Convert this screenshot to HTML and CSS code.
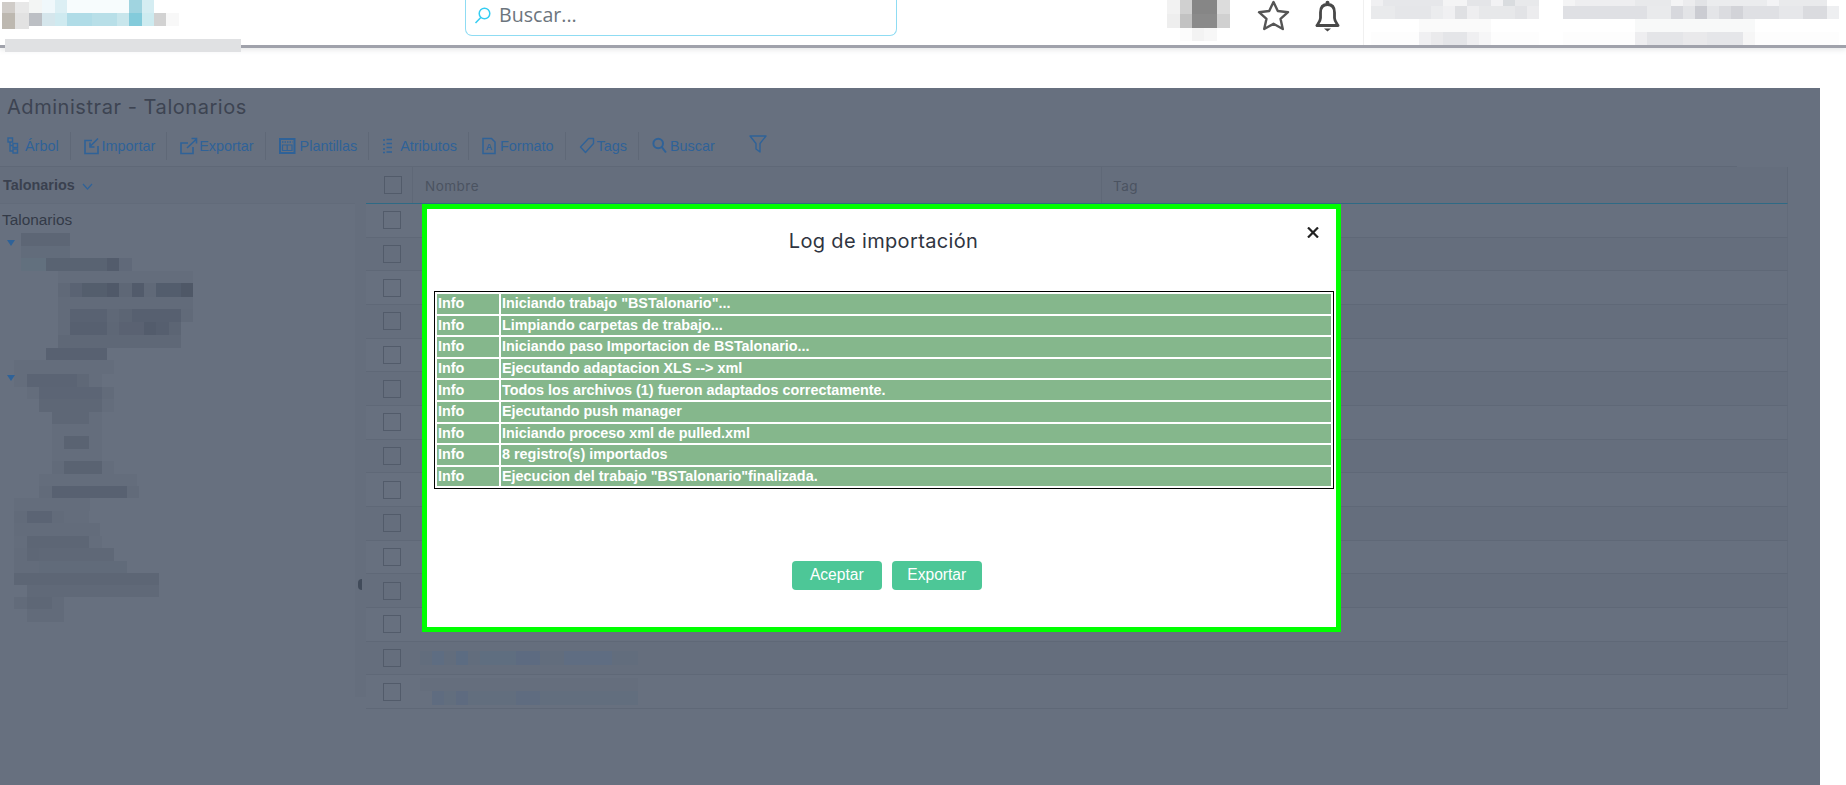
FILE: index.html
```html
<!DOCTYPE html>
<html lang="es">
<head>
<meta charset="utf-8">
<title>Administrar - Talonarios</title>
<link rel="stylesheet" href="styles.css">
</head>
<body>
<header class="topbar">
  <div class="brand">
    <svg class="mosaic" width="180" height="29" viewBox="0 0 180 29" shape-rendering="crispEdges">
      <rect x="2" y="2" width="13" height="11" fill="#d0ccc8"/><rect x="15" y="2" width="14" height="11" fill="#e8e8e8"/>
      <rect x="29" y="0" width="13" height="13" fill="#f3f5f4"/><rect x="42" y="0" width="13" height="13" fill="#f0f8fb"/>
      <rect x="55" y="0" width="12" height="13" fill="#dceff4"/><rect x="67" y="0" width="62" height="13" fill="#f7fcfd"/>
      <rect x="129" y="0" width="13" height="13" fill="#a0d4e0"/><rect x="142" y="0" width="12" height="13" fill="#d5edf2"/>
      <rect x="2" y="13" width="13" height="16" fill="#bdb8b0"/><rect x="15" y="13" width="14" height="16" fill="#e2e2e2"/>
      <rect x="29" y="13" width="13" height="13" fill="#bcbfc4"/><rect x="42" y="13" width="13" height="13" fill="#d5e6ec"/>
      <rect x="55" y="13" width="12" height="13" fill="#cfeaf0"/><rect x="67" y="13" width="25" height="13" fill="#b0dce7"/>
      <rect x="92" y="13" width="25" height="13" fill="#b8dfe8"/><rect x="117" y="13" width="12" height="13" fill="#c8e6ec"/>
      <rect x="129" y="13" width="13" height="13" fill="#83cbdb"/><rect x="142" y="13" width="12" height="13" fill="#cdebf0"/>
      <rect x="154" y="13" width="12" height="13" fill="#d2d2d2"/><rect x="166" y="13" width="13" height="13" fill="#f8f8f8"/>
    </svg>
    <div class="brand-label"></div>
  </div>
  <div class="search">
    <svg width="18" height="17" viewBox="0 0 18 17" fill="none" stroke="#35cdf2" stroke-width="1.5"><circle cx="10.5" cy="6.5" r="5.3"/><path d="M6.8 10.4 1.5 16"/></svg>
    <span class="search-text">Buscar...</span>
  </div>
  <svg class="mosaic avatar" width="63" height="41" viewBox="0 0 63 41" shape-rendering="crispEdges">
    <rect x="0" y="0" width="13" height="14" fill="#f2f2f2"/><rect x="13" y="0" width="12" height="14" fill="#d0d0d0"/>
    <rect x="25" y="0" width="25" height="14" fill="#868686"/><rect x="50" y="0" width="13" height="14" fill="#dcdcdc"/>
    <rect x="0" y="14" width="13" height="14" fill="#eeeeee"/><rect x="13" y="14" width="12" height="14" fill="#c2c2c2"/>
    <rect x="25" y="14" width="25" height="14" fill="#8a8a8a"/><rect x="50" y="14" width="13" height="14" fill="#d0d0d0"/>
    <rect x="13" y="28" width="12" height="13" fill="#fcfcfc"/><rect x="25" y="28" width="12" height="13" fill="#f3f3f3"/><rect x="37" y="28" width="13" height="13" fill="#f7f7f7"/>
  </svg>
  <svg class="star" width="33" height="31" viewBox="0 0 33 31" fill="none" stroke="#555" stroke-width="2.4" stroke-linejoin="round"><path d="M16.5 2 20.8 11 31 12.2 23.5 18.8 25.8 29 16.5 23.8 7.2 29 9.5 18.8 2 12.2 12.2 11Z"/></svg>
  <svg class="bell" width="25" height="32" viewBox="0 0 25 32" fill="none" stroke="#484848" stroke-width="2.800"><path d="M12.5 4.500C7.500 4.500 5.500 8 5.500 12.500V18C5.500 21 3.600 23 1.900 25.500H23.100C21.400 23 19.500 21 19.500 18V12.500C19.500 8 17.500 4.500 12.500 4.500Z" stroke-linejoin="round"/><circle cx="12.5" cy="2.8" r="2" fill="#484848" stroke="none"/><path d="M9 28.500H16L12.500 31.500Z" fill="#484848" stroke="none"/></svg>
  <div class="divider"></div>
  <svg class="mosaic user-a" width="168" height="45" viewBox="0 0 168 45" shape-rendering="crispEdges">
    <rect x="0" y="0" width="12" height="6" fill="#f0f0f2"/><rect x="12" y="0" width="60" height="6" fill="#e6e7ea"/><rect x="72" y="0" width="24" height="6" fill="#f4f4f5"/><rect x="96" y="0" width="24" height="6" fill="#e4e5e8"/><rect x="120" y="0" width="12" height="6" fill="#f2f2f4"/><rect x="132" y="0" width="12" height="6" fill="#d9dcdf"/><rect x="144" y="0" width="24" height="6" fill="#e8e9eb"/>
    <rect x="0" y="6" width="24" height="13" fill="#e9eaec"/><rect x="24" y="6" width="36" height="13" fill="#e5e6e9"/><rect x="60" y="6" width="12" height="13" fill="#ebecee"/><rect x="72" y="6" width="12" height="13" fill="#f0f0f2"/><rect x="84" y="6" width="12" height="13" fill="#dfe0e3"/><rect x="96" y="6" width="12" height="13" fill="#eeeef0"/><rect x="108" y="6" width="36" height="13" fill="#e7e8ea"/><rect x="144" y="6" width="12" height="13" fill="#e2e3e6"/><rect x="156" y="6" width="12" height="13" fill="#ececee"/>
    <rect x="48" y="19" width="72" height="13" fill="#fafafa"/>
    <rect x="0" y="32" width="168" height="13" fill="#fdfdfd"/><rect x="48" y="32" width="12" height="13" fill="#f0f0f2"/><rect x="60" y="32" width="12" height="13" fill="#eaeaec"/><rect x="72" y="32" width="24" height="13" fill="#e4e5e8"/><rect x="96" y="32" width="12" height="13" fill="#efeff1"/><rect x="108" y="32" width="12" height="13" fill="#f6f6f7"/>
  </svg>
  <svg class="mosaic user-b" width="276" height="45" viewBox="0 0 276 45" shape-rendering="crispEdges">
    <rect x="0" y="0" width="12" height="6" fill="#f4f4f5"/><rect x="12" y="0" width="60" height="6" fill="#eeeef0"/><rect x="72" y="0" width="36" height="6" fill="#e8e9eb"/><rect x="108" y="0" width="12" height="6" fill="#f4f4f5"/><rect x="120" y="0" width="12" height="6" fill="#ececee"/><rect x="132" y="0" width="12" height="6" fill="#e2e3e6"/><rect x="144" y="0" width="60" height="6" fill="#ebecee"/><rect x="204" y="0" width="12" height="6" fill="#f3f3f5"/><rect x="216" y="0" width="48" height="6" fill="#e9eaec"/>
    <rect x="0" y="6" width="84" height="13" fill="#dfe0e4"/><rect x="84" y="6" width="24" height="13" fill="#e9eaec"/><rect x="108" y="6" width="12" height="13" fill="#d7d8dd"/><rect x="120" y="6" width="12" height="13" fill="#e3e4e7"/><rect x="132" y="6" width="12" height="13" fill="#cbccd2"/><rect x="144" y="6" width="12" height="13" fill="#e4e5e8"/><rect x="156" y="6" width="12" height="13" fill="#dbdce0"/><rect x="168" y="6" width="12" height="13" fill="#d2d3d8"/><rect x="180" y="6" width="36" height="13" fill="#dfe0e4"/><rect x="216" y="6" width="24" height="13" fill="#e6e7ea"/><rect x="240" y="6" width="24" height="13" fill="#dadbdf"/><rect x="264" y="6" width="12" height="13" fill="#eeeff1"/>
    <rect x="72" y="19" width="120" height="13" fill="#f8f9f9"/>
    <rect x="0" y="32" width="276" height="13" fill="#fdfdfd"/><rect x="72" y="32" width="12" height="13" fill="#eeeef0"/><rect x="84" y="32" width="36" height="13" fill="#e4e5e8"/><rect x="120" y="32" width="24" height="13" fill="#e9e9eb"/><rect x="144" y="32" width="36" height="13" fill="#e5e6e9"/><rect x="180" y="32" width="12" height="13" fill="#f6f6f6"/>
  </svg>
</header>

<main class="app">
  <h1 class="page-title">Administrar - Talonarios</h1>
  <nav class="toolbar">
    <a class="tool first"><svg width="18" height="18" viewBox="0 0 18 18" fill="none" stroke="#2f6298" stroke-width="1.4"><rect x="1" y="1" width="4.5" height="4"/><rect x="6" y="6.5" width="4.5" height="4"/><rect x="6" y="12" width="4.5" height="4"/><path d="M3 5v9h3M3 8.500h3"/></svg>Árbol</a>
    <a class="tool"><svg width="18" height="18" viewBox="0 0 18 18" fill="none" stroke="#2f6298" stroke-width="1.6"><path d="M8 3.500H1V16.500H14V9"/><path d="M14 1.500 6.500 9M6 5.500V10H10.500"/></svg>Importar</a>
    <a class="tool"><svg width="19" height="18" viewBox="0 0 19 18" fill="none" stroke="#2f6298" stroke-width="1.6"><path d="M8 6H1V16.500H13V10"/><path d="M7 11 16 2.500M11.500 1.500H16.500V6.500"/></svg>Exportar</a>
    <a class="tool"><svg width="21" height="18" viewBox="0 0 21 18" fill="none" stroke="#2f6298"><rect x="1" y="2" width="14.500" height="14" stroke-width="2"/><path d="M3 5H13.500" stroke-width="1.500" stroke-dasharray="1.500 1"/><path d="M3.500 8H13V13.500H3.500ZM8.200 8V13.500" stroke-width="1.200"/></svg>Plantillas</a>
    <a class="tool"><svg width="18" height="18" viewBox="0 0 18 18" fill="none" stroke="#2f6298" stroke-width="1.300"><path d="M1 3h2M1 7.500h2M1 12h2M1 15.500h2"/><path d="M4.500 2.500h5.500M4.500 6.500h5.500M4.500 10.500h5.500M4.500 15h5.500" stroke-width="1.500"/></svg>Atributos</a>
    <a class="tool"><svg width="18" height="18" viewBox="0 0 18 18" fill="none" stroke="#2f6298" stroke-width="1.500"><path d="M1 1.500H9.500L13 5V16.500H1Z"/><text x="3.800" y="13" class="icon-letter">A</text></svg>Formato</a>
    <a class="tool"><svg width="18" height="18" viewBox="0 0 18 18" fill="none" stroke="#2f6298" stroke-width="1.400"><path d="M1.500 10 9.500 1.500H14.500V6.500L6.500 15.500Z" stroke-linejoin="round"/></svg>Tags</a>
    <a class="tool last"><svg width="18" height="18" viewBox="0 0 18 18" fill="none" stroke="#2f6298" stroke-width="2"><circle cx="6.200" cy="6.500" r="4.800"/><path d="M9.800 10.200 14 15.500"/></svg>Buscar</a>
    <svg class="filter" width="18" height="18" viewBox="0 0 18 18" fill="none" stroke="#2f6298" stroke-width="1.400"><path d="M1 1H17L11 8.500V17L7 14V8.500Z" stroke-linejoin="round"/></svg>
  </nav>
  <div class="workspace">
    <aside class="tree">
      <div class="tree-head">Talonarios <svg width="11" height="7" viewBox="0 0 11 7" fill="none" stroke="#2f6298" stroke-width="1.200"><path d="M1 1 5.500 6 10 1"/></svg></div>
      <div class="tree-root">Talonarios</div>
      <svg class="mosaic tree-blur" width="200" height="400" viewBox="0 232 200 400" shape-rendering="crispEdges">
        <rect x="21" y="233" width="49" height="13" fill="#5b6473"/><rect x="21" y="246" width="49" height="12" fill="#626c7b"/>
        <rect x="21" y="258" width="25" height="13" fill="#62707e"/><rect x="46" y="258" width="61" height="13" fill="#566070"/><rect x="107" y="258" width="12" height="13" fill="#4f5868"/><rect x="119" y="258" width="13" height="13" fill="#5f6878"/>
        <rect x="58" y="271" width="135" height="12" fill="#646d7c"/>
        <rect x="58" y="283" width="12" height="14" fill="#5f6877"/><rect x="70" y="283" width="12" height="14" fill="#586171"/><rect x="82" y="283" width="25" height="14" fill="#505a69"/><rect x="107" y="283" width="12" height="14" fill="#4b5464"/><rect x="119" y="283" width="13" height="14" fill="#5c6574"/><rect x="132" y="283" width="12" height="14" fill="#4e5767"/><rect x="144" y="283" width="12" height="14" fill="#5f6877"/><rect x="156" y="283" width="25" height="14" fill="#4f5969"/><rect x="181" y="283" width="12" height="14" fill="#4a5362"/>
        <rect x="58" y="297" width="135" height="12" fill="#626b7a"/>
        <rect x="58" y="309" width="12" height="13" fill="#626b7a"/><rect x="70" y="309" width="37" height="13" fill="#565f6f"/><rect x="107" y="309" width="12" height="13" fill="#5e6776"/><rect x="119" y="309" width="13" height="13" fill="#5a6372"/><rect x="132" y="309" width="49" height="13" fill="#545d6d"/><rect x="181" y="309" width="12" height="13" fill="#606978"/>
        <rect x="58" y="322" width="12" height="13" fill="#626b7a"/><rect x="70" y="322" width="37" height="13" fill="#545d6d"/><rect x="107" y="322" width="12" height="13" fill="#5c6574"/><rect x="119" y="322" width="25" height="13" fill="#575f6f"/><rect x="144" y="322" width="12" height="13" fill="#4f5868"/><rect x="156" y="322" width="13" height="13" fill="#535c6c"/><rect x="169" y="322" width="12" height="13" fill="#5a6372"/>
        <rect x="58" y="335" width="123" height="13" fill="#5e6776"/>
        <rect x="46" y="348" width="61" height="12" fill="#555e6e"/>
        <rect x="14" y="360" width="100" height="14" fill="#646d7c"/>
        <rect x="14" y="374" width="13" height="13" fill="#646d7c"/><rect x="27" y="374" width="50" height="13" fill="#596272"/><rect x="77" y="374" width="12" height="13" fill="#5e6776"/><rect x="89" y="374" width="13" height="13" fill="#646d7c"/>
        <rect x="27" y="387" width="12" height="12" fill="#646d7c"/><rect x="39" y="387" width="63" height="12" fill="#5a6373"/><rect x="102" y="387" width="12" height="12" fill="#626b7a"/>
        <rect x="39" y="399" width="63" height="13" fill="#5c6574"/><rect x="102" y="399" width="12" height="13" fill="#646d7c"/>
        <rect x="52" y="412" width="37" height="12" fill="#5c6574"/><rect x="89" y="412" width="13" height="12" fill="#646d7c"/>
        <rect x="52" y="424" width="50" height="12" fill="#646d7c"/>
        <rect x="64" y="436" width="25" height="13" fill="#58616f"/><rect x="52" y="436" width="12" height="13" fill="#646d7c"/><rect x="89" y="436" width="13" height="13" fill="#646d7c"/>
        <rect x="52" y="449" width="50" height="12" fill="#646d7c"/>
        <rect x="64" y="461" width="38" height="13" fill="#586170"/><rect x="52" y="461" width="12" height="13" fill="#626b7a"/><rect x="102" y="461" width="12" height="13" fill="#646d7c"/>
        <rect x="39" y="474" width="98" height="12" fill="#646d7c"/>
        <rect x="39" y="486" width="13" height="12" fill="#626b7a"/><rect x="52" y="486" width="75" height="12" fill="#555e6e"/><rect x="127" y="486" width="12" height="12" fill="#626b7a"/>
        <rect x="14" y="498" width="76" height="13" fill="#646d7c"/>
        <rect x="14" y="511" width="13" height="12" fill="#626b7a"/><rect x="27" y="511" width="25" height="12" fill="#596272"/><rect x="52" y="511" width="12" height="12" fill="#626b7a"/><rect x="64" y="511" width="25" height="12" fill="#646d7c"/>
        <rect x="14" y="523" width="86" height="13" fill="#636c7b"/>
        <rect x="27" y="536" width="62" height="12" fill="#5b6473"/><rect x="14" y="536" width="13" height="12" fill="#646d7c"/><rect x="89" y="536" width="13" height="12" fill="#646d7c"/>
        <rect x="14" y="548" width="13" height="13" fill="#636c7b"/><rect x="27" y="548" width="12" height="13" fill="#5c6574"/><rect x="39" y="548" width="75" height="13" fill="#5e6776"/>
        <rect x="14" y="561" width="25" height="12" fill="#636c7b"/><rect x="39" y="561" width="88" height="12" fill="#606a79"/>
        <rect x="14" y="573" width="145" height="12" fill="#5b6473"/>
        <rect x="27" y="585" width="132" height="12" fill="#5f6877"/>
        <rect x="14" y="597" width="13" height="12" fill="#626b7a"/><rect x="27" y="597" width="25" height="12" fill="#5c6574"/><rect x="52" y="597" width="12" height="12" fill="#626b7a"/>
        <rect x="27" y="609" width="37" height="13" fill="#626b7a"/>
      </svg>
      <span class="caret caret-a"></span>
      <span class="caret caret-b"></span>
    </aside>
    <div class="gutter"><span class="collapser"></span></div>
    <section class="grid">
      <div class="grid-head">
        <div class="col-check"><span class="check"></span></div>
        <div class="col-name">Nombre</div>
        <div class="col-tag">Tag</div>
      </div>
      <div class="grid-row"><div class="col-check"><span class="check"></span></div></div>
      <div class="grid-row"><div class="col-check"><span class="check"></span></div></div>
      <div class="grid-row"><div class="col-check"><span class="check"></span></div></div>
      <div class="grid-row"><div class="col-check"><span class="check"></span></div></div>
      <div class="grid-row"><div class="col-check"><span class="check"></span></div></div>
      <div class="grid-row"><div class="col-check"><span class="check"></span></div></div>
      <div class="grid-row"><div class="col-check"><span class="check"></span></div></div>
      <div class="grid-row"><div class="col-check"><span class="check"></span></div></div>
      <div class="grid-row"><div class="col-check"><span class="check"></span></div></div>
      <div class="grid-row"><div class="col-check"><span class="check"></span></div></div>
      <div class="grid-row"><div class="col-check"><span class="check"></span></div></div>
      <div class="grid-row"><div class="col-check"><span class="check"></span></div></div>
      <div class="grid-row"><div class="col-check"><span class="check"></span></div></div>
      <div class="grid-row"><div class="col-check"><span class="check"></span></div>
        <svg class="mosaic" width="218" height="14" viewBox="0 0 218 14" shape-rendering="crispEdges"><rect width="218" height="14" fill="#626d7d"/><rect x="12" width="12" height="14" fill="#5e6d82"/><rect x="36" width="12" height="14" fill="#5c6c82"/><rect x="60" width="36" height="14" fill="#5f6e80"/><rect x="96" width="24" height="14" fill="#5d6b81"/><rect x="144" width="48" height="14" fill="#5f6d82"/></svg>
      </div>
      <div class="grid-row"><div class="col-check"><span class="check"></span></div>
        <svg class="mosaic" width="218" height="27" viewBox="0 0 218 27" shape-rendering="crispEdges"><rect width="218" height="13" fill="#656e7d"/><rect x="12" y="13" width="206" height="14" fill="#626e7e"/><rect x="12" y="13" width="12" height="14" fill="#5f6c80"/><rect x="36" y="13" width="12" height="14" fill="#5e6b80"/><rect x="96" y="13" width="24" height="14" fill="#5f6c80"/></svg>
      </div>
    </section>
  </div>

  <div class="modal">
    <div class="modal-head">
      <h2 class="modal-title">Log de importación</h2>
      <button class="modal-close" aria-label="Cerrar"><svg width="12" height="11" viewBox="0 0 12 11" fill="none" stroke="#222" stroke-width="2.200"><path d="M1 .5 11 10.500M11 .5 1 10.500"/></svg></button>
    </div>
    <table class="log">
      <tr><td class="lvl">Info</td><td>Iniciando trabajo "BSTalonario"...</td></tr>
      <tr><td class="lvl">Info</td><td>Limpiando carpetas de trabajo...</td></tr>
      <tr><td class="lvl">Info</td><td>Iniciando paso Importacion de BSTalonario...</td></tr>
      <tr><td class="lvl">Info</td><td>Ejecutando adaptacion XLS --&gt; xml</td></tr>
      <tr><td class="lvl">Info</td><td>Todos los archivos (1) fueron adaptados correctamente.</td></tr>
      <tr><td class="lvl">Info</td><td>Ejecutando push manager</td></tr>
      <tr><td class="lvl">Info</td><td>Iniciando proceso xml de pulled.xml</td></tr>
      <tr><td class="lvl">Info</td><td>8 registro(s) importados</td></tr>
      <tr><td class="lvl">Info</td><td>Ejecucion del trabajo "BSTalonario"finalizada.</td></tr>
    </table>
    <div class="modal-foot">
      <button class="btn">Aceptar</button>
      <button class="btn">Exportar</button>
    </div>
  </div>
</main>
</body>
</html>
```
FILE: styles.css
```css
* { box-sizing: border-box; }
html, body { margin: 0; height: 100%; }
body {
  position: relative;
  overflow: hidden;
  background: #fff;
  font-family: "Liberation Sans", Arial, sans-serif;
  font-size: 14.4px;
}
.mosaic { display: block; flex: none; }

/* top bar */
.topbar {
  position: relative;
  display: flex;
  align-items: flex-start;
  height: 48px;
  border-bottom: 3px solid #a0a2ab;
  box-shadow: 0 2px 5px rgba(120, 125, 135, .18);
  background: #fff;
}
.brand { width: 465px; flex: none; }
.brand-label {
  position: absolute;
  left: 5px;
  top: 39px;
  width: 236px;
  height: 13px;
  background: #e0e1e3;
}
.search {
  display: flex;
  align-items: center;
  width: 432px;
  height: 36px;
  padding-left: 8px;
  border: 1px solid #8fdcf3;
  border-top: 0;
  border-radius: 0 0 7px 7px;
  flex: none;
}
.search-text {
  margin-left: 7px;
  margin-top: -6px;
  font-family: "Open Sans", sans-serif;
  font-size: 19.6px;
  color: #6c757d;
}
.search svg { margin-top: -4px; }
.avatar { margin-left: 270px; }
.star { margin-left: 27px; flex: none; }
.bell { margin-left: 25px; flex: none; }
.divider { width: 1px; height: 45px; margin-left: 23px; background: #f0f0f0; flex: none; }
.user-a { margin-left: 7px; }
.user-b { margin-left: 24px; }

/* application behind the dialog */
.app {
  width: 1820px;
  height: 697px;
  margin-top: 40px;
  background: #67707f;
  overflow: hidden;
}
.page-title {
  height: 44px;
  margin: 0;
  padding-left: 7px;
  font-family: Inter, sans-serif;
  font-size: 20px;
  font-weight: 400;
  line-height: 38px;
  color: #3d4452;
  letter-spacing: .55px;
}
.toolbar {
  display: flex;
  align-items: flex-start;
  width: 1737px;
  height: 35px;
  border-bottom: 1px solid #5f6877;
}
.tool {
  display: flex;
  align-items: center;
  height: 28px;
  padding: 0 11px 0 13px;
  border-right: 1px solid #5f6877;
  font-size: 14.4px;
  color: #2f6298;
}
.tool.first { padding-left: 7px; }
.tool.last { border-right: 0; }
.tool svg { flex: none; }
.icon-letter {
  font-family: "Liberation Sans", sans-serif;
  font-size: 9px;
  font-weight: 700;
  fill: #2f6298;
  stroke: none;
}
.filter { margin-left: 23px; margin-top: 3px; }

.workspace { display: flex; height: 530px; }
.tree { position: relative; width: 355px; flex: none; }
.tree-head {
  height: 37px;
  padding-left: 3px;
  border-bottom: 1px solid #626b7a;
  background: #656e7d;
  font-weight: 700;
  line-height: 36px;
  color: #3a414f;
}
.tree-head svg { margin-left: 3px; }
.tree-root {
  height: 28px;
  padding-left: 2px;
  font-size: 15.4px;
  line-height: 32px;
  color: #333a47;
}
.tree-blur { opacity: .8; }
.caret {
  position: absolute;
  left: 7px;
  width: 0;
  height: 0;
  border-left: 4px solid transparent;
  border-right: 4px solid transparent;
  border-top: 6px solid #2f6298;
}
.caret-a { top: 73px; }
.caret-b { top: 208px; }

.gutter { position: relative; width: 11px; flex: none; background: #656e7d; }
.collapser {
  position: absolute;
  left: 3px;
  top: 412px;
  width: 4px;
  height: 11px;
  border-radius: 4px 0 0 4px;
  background: #414b5a;
}
.grid { width: 1422px; flex: none; }
.grid-head {
  display: flex;
  height: 37px;
  border-bottom: 1px solid #2e6a85;
  background: #656e7d;
  border-right: 1px solid #5f6877;
  font-family: Inter, sans-serif;
  font-size: 13.5px;
  letter-spacing: .5px;
  color: #4b5361;
}
.col-check {
  display: flex;
  align-items: center;
  width: 47px;
  height: 100%;
  padding-left: 17px;
  flex: none;
}
.grid-head .col-check { padding-left: 18px; border-right: 1px solid #5f6877; }
.col-name { width: 689px; padding-left: 12px; line-height: 38px; border-right: 1px solid #5f6877; }
.col-tag { padding-left: 11px; line-height: 38px; }
.check { width: 18px; height: 18px; border: 1px solid #525b6a; }
.grid-row {
  display: flex;
  align-items: center;
  height: 33.66px;
  border-bottom: 1px solid #5f6877;
  border-right: 1px solid #626b7a;
}
.grid-row:nth-child(odd) { background: #656e7d; }
.grid-row .mosaic { margin-left: 7px; }

/* dialog */
.modal {
  position: absolute;
  left: 422px;
  top: 204px;
  display: flex;
  flex-direction: column;
  width: 919px;
  height: 428px;
  padding: 0 7px;
  border: 5px solid #00ff00;
  background: #fff;
}
.modal-head { position: relative; height: 82px; flex: none; }
.modal-title {
  margin: 0;
  padding: 21px 0 0 4px;
  text-align: center;
  font-family: Inter, sans-serif;
  font-size: 20px;
  font-weight: 400;
  line-height: 22px;
  letter-spacing: .35px;
  color: #2f3541;
}
.modal-close {
  position: absolute;
  right: 10px;
  top: 18px;
  display: block;
  padding: 0;
  border: 0;
  background: none;
  line-height: 0;
}
.log {
  width: 900px;
  border: 1px solid #000;
  border-collapse: separate;
  border-spacing: 2px;
  flex: none;
}
.log td {
  height: 19.6px;
  padding: 0 1px;
  background: #85b78c;
  font-size: 14.4px;
  font-weight: 700;
  line-height: 19px;
  color: #fff;
}
.log .lvl { width: 62px; }
.modal-foot {
  display: flex;
  gap: 10.5px;
  margin-top: 71.5px;
  margin-left: 358px;
}
.btn {
  width: 89.5px;
  height: 29px;
  padding: 0;
  border: 0;
  border-radius: 4px;
  background: #4dc797;
  font-family: "Liberation Sans", sans-serif;
  font-size: 15.6px;
  color: #fff;
}
```
